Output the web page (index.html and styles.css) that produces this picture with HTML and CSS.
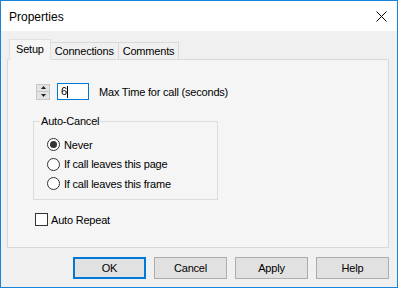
FILE: index.html
```html
<!DOCTYPE html>
<html>
<head>
<meta charset="utf-8">
<link rel="stylesheet" href="styles.css">
</head>
<body>
<div class="window">
  <div class="titlebar">
    <span class="title">Properties</span>
    <svg class="close" width="11" height="11" viewBox="0 0 11 11"><path d="M0.5 0.5 L10.5 10.5 M10.5 0.5 L0.5 10.5" stroke="#000" stroke-width="1" fill="none"/></svg>
  </div>
  <div class="content">
    <div class="tabs">
      <div class="tab active">Setup</div>
      <div class="tab">Connections</div>
      <div class="tab">Comments</div>
    </div>
    <div class="panel">
      <div class="row">
        <div class="spin">
          <span class="spin-btn"><svg width="5" height="3" viewBox="0 0 5 3"><path d="M2.5 0 L5 3 L0 3 Z" fill="#222"/></svg></span>
          <span class="spin-btn"><svg width="5" height="3" viewBox="0 0 5 3"><path d="M0 0 L5 0 L2.5 3 Z" fill="#222"/></svg></span>
        </div>
        <div class="textbox">6<span class="caret"></span></div>
        <span class="label">Max Time for call (seconds)</span>
      </div>
      <fieldset class="group">
        <legend>Auto-Cancel</legend>
        <div class="opt"><span class="radio checked"></span>Never</div>
        <div class="opt"><span class="radio"></span>If call leaves this page</div>
        <div class="opt"><span class="radio"></span>If call leaves this frame</div>
      </fieldset>
      <div class="check"><span class="box"></span>Auto Repeat</div>
    </div>
    <div class="buttons">
      <div class="btn default">OK</div>
      <div class="btn">Cancel</div>
      <div class="btn">Apply</div>
      <div class="btn">Help</div>
    </div>
  </div>
</div>
</body>
</html>
```
FILE: styles.css
```css
html, body {
  margin: 0;
  padding: 0;
}
body {
  font-family: "Liberation Sans", Arial, sans-serif;
  font-size: 11px;
  letter-spacing: -0.2px;
  color: #000;
  background: #f0f0f0;
}
.window {
  width: 398px;
  height: 288px;
  box-sizing: border-box;
  border: 1px solid #1883d7;
  display: flex;
  flex-direction: column;
  background: #f0f0f0;
}
.titlebar {
  height: 30px;
  background: #fff;
  display: flex;
  align-items: center;
  justify-content: space-between;
  padding: 0 10px 0 8px;
  flex: none;
}
.title {
  font-family: "Liberation Sans", sans-serif;
  font-size: 12px;
  letter-spacing: 0;
  margin-top: 1px;
}
.close {
  display: block;
  margin-top: 1px;
}
.content {
  flex: 1;
  padding: 8px 8px 0 6px;
  display: flex;
  flex-direction: column;
}
.tabs {
  display: flex;
  align-items: flex-end;
  height: 20px;
  padding-left: 2px;
}
.tab {
  height: 17px;
  box-sizing: border-box;
  border: 1px solid #d9d9d9;
  border-bottom: none;
  padding: 0 4px;
  display: flex;
  align-items: center;
  background: #f0f0f0;
  margin-left: -1px;
}
.tab.active {
  height: 21px;
  margin-bottom: -1px;
  margin-left: 0;
  padding: 0 6px 2px 6px;
  position: relative;
  z-index: 1;
  background: #f5f5f5;
  border-color: #e0e0e0;
}
.panel {
  height: 189px;
  box-sizing: border-box;
  border: 1px solid #d9d9d9;
  background: #f5f5f5;
  padding: 23px 0 0 25px;
}
.row {
  display: flex;
  align-items: center;
  height: 17px;
}
.spin {
  width: 14px;
  height: 16px;
  display: flex;
  flex-direction: column;
  margin-left: 3px;
}
.spin-btn {
  flex: 1;
  background: #e3e3e3;
  border: 1px solid #c8c8c8;
  display: flex;
  align-items: center;
  justify-content: center;
}
.spin-btn + .spin-btn {
  border-top: none;
}
.textbox {
  width: 32px;
  height: 17px;
  box-sizing: border-box;
  border: 1px solid #0078d7;
  background: #fff;
  margin-left: 7px;
  padding-left: 3px;
  display: flex;
  align-items: center;
  line-height: 1;
}
.caret {
  width: 1px;
  height: 12px;
  background: #000;
}
.label {
  margin-left: 10px;
}
.group {
  margin: 15px 0 0 0;
  width: 185px;
  box-sizing: border-box;
  border: 1px solid #dcdcdc;
  padding: 7px 0 4px 6px;
  height: 85px;
}
.group legend {
  padding: 0 1px;
  line-height: 13px;
}
.opt {
  display: flex;
  align-items: center;
  height: 19.5px;
  margin-left: 7px;
}
.radio {
  width: 13px;
  height: 13px;
  box-sizing: border-box;
  border: 1px solid #333;
  border-radius: 50%;
  background: #fff;
  margin-right: 4px;
  display: flex;
  align-items: center;
  justify-content: center;
}
.radio.checked::after {
  content: "";
  width: 7px;
  height: 7px;
  border-radius: 50%;
  background: #333;
}
.check {
  display: flex;
  align-items: center;
  margin-top: 13px;
  margin-left: 2px;
}
.box {
  width: 13px;
  height: 13px;
  box-sizing: border-box;
  border: 1px solid #333;
  background: #fff;
  margin-right: 3px;
}
.buttons {
  display: flex;
  justify-content: flex-end;
  gap: 8px;
  margin-top: 9px;
}
.btn {
  width: 73px;
  height: 22px;
  box-sizing: border-box;
  border: 1px solid #adadad;
  background: #e1e1e1;
  display: flex;
  align-items: center;
  justify-content: center;
}
.btn.default {
  border: 2px solid #0078d7;
}
```
